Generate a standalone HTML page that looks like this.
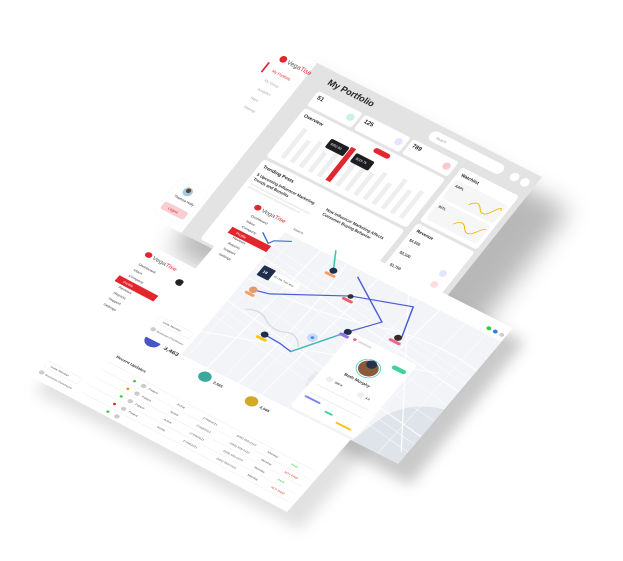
<!DOCTYPE html>
<html><head><meta charset="utf-8"><style>
html,body{margin:0;padding:0;background:#fff;width:623px;height:561px;overflow:hidden}
svg{display:block}
text{font-family:"Liberation Sans",sans-serif}
</style></head><body>
<svg width="623" height="561" viewBox="0 0 623 561" xmlns="http://www.w3.org/2000/svg">
<defs>
<filter id="blur" x="-30%" y="-30%" width="160%" height="160%"><feGaussianBlur stdDeviation="12"/></filter>
<filter id="blur2" x="-30%" y="-30%" width="160%" height="160%"><feGaussianBlur stdDeviation="7"/></filter>
</defs>

<polygon points="305,75 570,210 435,385 170,250" fill="#8a8a8a" opacity="0.6" filter="url(#blur)"/>
<polygon points="150,255 415,395 300,530 35,392" fill="#aaa" opacity="0.35" filter="url(#blur2)"/>
<polygon points="262,210 525,342 410,485 150,350" fill="#888" opacity="0.45" filter="url(#blur2)"/>

<!-- TOP PANEL -->
<g transform="matrix(0.26,0.132,-0.194,0.243,282,45)">
<rect width="1000" height="700" fill="#fff"/>
<rect x="135" width="865" height="700" fill="#e3e3e3"/>
<rect x="0" y="70" width="6" height="40" fill="#e3262e"/>
<circle cx="35" cy="40" r="12" fill="#e3262e"/>
<text x="52" y="48" font-size="22" fill="#555">Vega<tspan fill="#e3262e">Tise</tspan></text>
<rect x="18" y="72" width="105" height="34" rx="8" fill="#fff" stroke="#f0f0f0"/>
<text x="30" y="94" font-size="13" fill="#e3262e">My Portfolio</text>
<text x="30" y="132" font-size="12" fill="#aaa">My Group</text>
<text x="30" y="168" font-size="12" fill="#aaa">Analytics</text>
<text x="30" y="204" font-size="12" fill="#aaa">Rack</text>
<text x="30" y="240" font-size="12" fill="#aaa">Settings</text>
<rect x="12" y="540" width="110" height="140" rx="10" fill="#fff" stroke="#eee"/>
<circle cx="63" cy="570" r="16" fill="#9ccbe0"/><circle cx="63" cy="566" r="8" fill="#6b4020"/>
<text x="35" y="605" font-size="12" fill="#333">Theresa Holly</text>
<rect x="22" y="630" width="90" height="30" rx="8" fill="#f7cfd1"/>
<text x="45" y="650" font-size="12" fill="#e3262e">Logout</text>
<text x="208" y="48" font-size="30" font-weight="bold" fill="#222">My Portfolio</text>
<rect x="600" y="22" width="280" height="38" rx="19" fill="#fff"/>
<text x="625" y="46" font-size="12" fill="#999">Search</text>
<circle cx="925" cy="41" r="15" fill="#fff"/><circle cx="965" cy="41" r="15" fill="#fff"/>
<rect x="200" y="80" width="170" height="60" rx="8" fill="#fff"/>
<text x="212" y="106" font-size="20" font-weight="bold" fill="#222">51</text>
<circle cx="345" cy="110" r="13" fill="#c8f3e6"/>
<rect x="380" y="80" width="175" height="60" rx="8" fill="#fff"/>
<text x="392" y="106" font-size="20" font-weight="bold" fill="#222">125</text>
<circle cx="530" cy="110" r="13" fill="#e2e5fb"/>
<rect x="565" y="80" width="175" height="60" rx="8" fill="#fff"/>
<text x="577" y="106" font-size="20" font-weight="bold" fill="#222">789</text>
<circle cx="715" cy="110" r="13" fill="#f9c9cc"/>
<rect x="200" y="150" width="540" height="200" rx="10" fill="#fff"/>
<text x="215" y="178" font-size="16" font-weight="bold" fill="#222">Overview</text>
<rect x="480" y="160" width="60" height="18" rx="9" fill="#e3262e"/>
<g fill="#eeeeee">
<rect x="240" y="210" width="16" height="120"/><rect x="275" y="240" width="16" height="90"/><rect x="310" y="225" width="16" height="105"/><rect x="345" y="250" width="16" height="80"/><rect x="380" y="215" width="16" height="115"/><rect x="450" y="230" width="16" height="100"/><rect x="485" y="205" width="16" height="125"/><rect x="520" y="240" width="16" height="90"/><rect x="555" y="220" width="16" height="110"/><rect x="590" y="245" width="16" height="85"/><rect x="625" y="210" width="16" height="120"/><rect x="660" y="235" width="16" height="95"/><rect x="695" y="220" width="16" height="110"/>
</g>
<rect x="413" y="195" width="18" height="135" fill="#e3262e"/>
<rect x="340" y="200" width="70" height="36" rx="6" fill="#1e1e22"/>
<text x="350" y="220" font-size="11" fill="#fff">$352.90</text>
<rect x="440" y="205" width="70" height="36" rx="6" fill="#1e1e22"/>
<text x="450" y="225" font-size="11" fill="#fff">$215.75</text>
<rect x="200" y="360" width="540" height="330" rx="10" fill="#fff"/>
<text x="215" y="388" font-size="16" font-weight="bold" fill="#222">Trending Posts</text>
<text x="215" y="420" font-size="14" font-weight="bold" fill="#333">5 Upcoming Influencer Marketing</text>
<text x="215" y="438" font-size="14" font-weight="bold" fill="#333">Trends and Benefits</text>
<rect x="215" y="450" width="230" height="6" fill="#eee"/><rect x="215" y="462" width="200" height="6" fill="#eee"/>
<text x="480" y="420" font-size="14" font-weight="bold" fill="#333">How Influencer Marketing Affects</text>
<text x="480" y="438" font-size="14" font-weight="bold" fill="#333">Consumer Buying Behavior</text>
<rect x="760" y="90" width="220" height="220" rx="10" fill="#fff"/>
<text x="775" y="118" font-size="15" font-weight="bold" fill="#222">Watchlist</text>
<rect x="772" y="135" width="196" height="75" rx="8" fill="#f6f6f6"/>
<rect x="772" y="220" width="196" height="75" rx="8" fill="#f6f6f6"/>
<text x="782" y="158" font-size="12" font-weight="bold" fill="#333">AAPL</text>
<text x="782" y="243" font-size="12" font-weight="bold" fill="#333">INTL</text>
<path d="M860 190 q20 -30 40 -5 t40 -10 t20 -15" stroke="#f5b400" stroke-width="3" fill="none"/>
<path d="M860 270 q20 -30 40 -5 t40 -5 t20 -20" stroke="#f5b400" stroke-width="3" fill="none"/>
<rect x="760" y="320" width="220" height="250" rx="10" fill="#fff"/>
<text x="775" y="348" font-size="15" font-weight="bold" fill="#222">Revenue</text>
<text x="775" y="385" font-size="13" font-weight="bold" fill="#333">$4,500</text>
<text x="775" y="435" font-size="13" font-weight="bold" fill="#333">$2,100</text>
<text x="775" y="485" font-size="13" font-weight="bold" fill="#333">$1,750</text>
<circle cx="940" cy="430" r="12" fill="#e2e5fb"/><circle cx="940" cy="475" r="12" fill="#fbdde0"/><circle cx="940" cy="520" r="12" fill="#dce6fb"/>
</g>

<!-- TABLE PANEL -->
<g transform="matrix(0.259,0.137,-0.167,0.19,145,242)">
<rect width="1000" height="700" fill="#fff"/>
<circle cx="40" cy="40" r="12" fill="#e3262e"/>
<text x="57" y="48" font-size="22" fill="#555">Vega<tspan fill="#e3262e">Tise</tspan></text>
<g font-size="13" fill="#333">
<text x="35" y="95">Dashboard</text><text x="35" y="125">Inbox</text><text x="35" y="155">Company</text>
<text x="35" y="215">Reviews</text><text x="35" y="245">Reports</text><text x="35" y="275">Support</text><text x="35" y="305">Settings</text>
</g>
<rect x="10" y="168" width="150" height="30" fill="#e3262e"/>
<text x="35" y="188" font-size="13" fill="#fff">Profile</text>
<circle cx="185" cy="80" r="14" fill="#222"/>
<rect x="20" y="610" width="130" height="30" rx="6" fill="none" stroke="#ddd"/>
<text x="40" y="630" font-size="11" fill="#555">Invite Member</text>
<circle cx="30" cy="665" r="9" fill="#ccc"/>
<text x="45" y="669" font-size="10" fill="#555">Buchanan Chandreyee</text>
<circle cx="250" cy="340" r="28" fill="#4656c9"/>
<text x="295" y="350" font-size="22" font-weight="bold" fill="#333">3,463</text>
<circle cx="470" cy="370" r="22" fill="#3aa99c"/>
<text x="505" y="378" font-size="14" font-weight="bold" fill="#333">2,565</text>
<circle cx="650" cy="370" r="22" fill="#d4a82a"/>
<text x="685" y="378" font-size="14" font-weight="bold" fill="#333">2,565</text>
<text x="190" y="470" font-size="15" font-weight="bold" fill="#333">Recent Updates</text>
<g stroke="#eee" stroke-width="2">
<line x1="180" y1="500" x2="980" y2="500"/><line x1="180" y1="540" x2="980" y2="540"/><line x1="180" y1="580" x2="980" y2="580"/><line x1="180" y1="620" x2="980" y2="620"/><line x1="180" y1="660" x2="980" y2="660"/>
</g>
<g fill="#ccc"><circle cx="330" cy="520" r="9"/><circle cx="330" cy="560" r="9"/><circle cx="330" cy="600" r="9"/><circle cx="330" cy="640" r="9"/><circle cx="330" cy="680" r="9"/></g>
<circle cx="295" cy="520" r="5" fill="#2ecc40"/><circle cx="295" cy="560" r="5" fill="#f58a07"/><circle cx="295" cy="600" r="5" fill="#2ecc40"/><circle cx="295" cy="640" r="5" fill="#e3262e"/><circle cx="295" cy="680" r="5" fill="#2ecc40"/>
<g font-size="11" fill="#555">
<text x="350" y="524">Patient</text><text x="460" y="524">Active</text><text x="560" y="524">27/08/2021</text><text x="690" y="524">(555) 555-0110</text><text x="810" y="524">Monday</text><text x="900" y="524" fill="#2ecc40">PAID</text>
<text x="350" y="564">Patient</text><text x="460" y="564">Active</text><text x="560" y="564">27/08/2021</text><text x="690" y="564">(555) 555-0110</text><text x="810" y="564">Monday</text><text x="900" y="564" fill="#e3262e">NOT PAID</text>
<text x="350" y="604">Patient</text><text x="460" y="604">Active</text><text x="560" y="604">27/08/2021</text><text x="690" y="604">(555) 555-0110</text><text x="810" y="604">Monday</text><text x="900" y="604" fill="#2ecc40">PAID</text>
<text x="350" y="644">Patient</text><text x="460" y="644">Active</text><text x="560" y="644">27/08/2021</text><text x="690" y="644">(555) 555-0110</text><text x="810" y="644">Monday</text><text x="900" y="644" fill="#e3262e">NOT PAID</text>
</g>
</g>

<!-- MAP PANEL -->
<g transform="matrix(0.258,0.13,-0.164,0.194,255,198)">
<rect width="1000" height="700" fill="#fff"/>
<circle cx="30" cy="30" r="12" fill="#e3262e"/>
<text x="47" y="38" font-size="22" fill="#555">Vega<tspan fill="#e3262e">Tise</tspan></text>
<g font-size="13" fill="#333">
<text x="30" y="75">Dashboard</text><text x="30" y="103">Inbox</text><text x="30" y="131">Company</text>
<text x="30" y="187">Reviews</text><text x="30" y="215">Reports</text><text x="30" y="243">Support</text><text x="30" y="271">Settings</text>
</g>
<rect x="5" y="145" width="150" height="30" fill="#e3262e"/>
<text x="30" y="165" font-size="13" fill="#fff">Profile</text>
<rect x="15" y="600" width="130" height="30" rx="6" fill="none" stroke="#ddd"/>
<text x="35" y="620" font-size="11" fill="#555">Invite Member</text>
<circle cx="25" cy="660" r="9" fill="#ccc"/>
<text x="40" y="664" font-size="10" fill="#555">Buchanan Chandreyee</text>
<text x="175" y="45" font-size="12" fill="#555">Search</text>
<circle cx="935" cy="45" r="8" fill="#2ecc40"/><circle cx="960" cy="45" r="8" fill="#2d7ff9"/><circle cx="985" cy="45" r="8" fill="#ccc"/>
<rect x="160" y="70" width="840" height="630" fill="#f3f4f7"/>
<path d="M820 700 L850 560 Q890 450 1000 420 L1000 700 Z" fill="#dfe3ea"/>
<path d="M560 520 q40 -20 60 20 t-10 60 q-30 10 -50 -30 Z" fill="#e6e9ee"/>
<g stroke="#fff" stroke-width="4" fill="none">
<path d="M160 200 L1000 330"/><path d="M160 420 L1000 560"/><path d="M300 70 L260 700"/><path d="M520 70 L470 700"/><path d="M760 70 L700 700"/><path d="M160 300 Q400 320 600 250 T1000 220"/><path d="M400 70 Q420 300 380 700"/><path d="M160 580 L900 300"/><path d="M640 70 L980 650"/>
</g>
<g stroke="#fdfdfe" stroke-width="2" fill="none">
<path d="M200 70 L180 700"/><path d="M350 70 L330 700"/><path d="M600 70 L570 700"/><path d="M860 70 L820 700"/><path d="M160 140 L1000 260"/><path d="M160 500 L1000 640"/><path d="M160 360 L1000 480"/><path d="M940 70 L920 700"/><path d="M160 250 L1000 400"/><path d="M450 70 L420 700"/><path d="M680 70 L650 700"/><path d="M160 170 L1000 290"/><path d="M160 460 L1000 600"/>
</g>
<path d="M230 420 q40 -30 80 0 t80 10 t70 30" stroke="#d6dbe3" stroke-width="5" fill="none"/>
<polyline points="100,110 140,140 150,120 200,90" fill="none" stroke="#3f6fd8" stroke-width="5"/>
<polyline points="206,335 260,320 486,180 680,105 720,240" fill="none" stroke="#4a5fd4" stroke-width="5"/>
<polyline points="340,476 400,480 450,490 560,315 630,217 460,98" fill="none" stroke="#4a5fd4" stroke-width="5"/>
<polyline points="450,490 560,315" fill="none" stroke="#3fbfb0" stroke-width="5"/>
<polyline points="380,120 340,42" fill="none" stroke="#3fbfb0" stroke-width="5"/>
<rect x="180" y="225" width="45" height="50" rx="4" fill="#1f2d4e"/>
<text x="190" y="255" font-size="15" font-weight="bold" fill="#fff">18</text>
<rect x="225" y="230" width="100" height="40" fill="#fff"/>
<text x="232" y="252" font-size="10" fill="#333">52 Oak Tree way</text>
<circle cx="206" cy="335" r="14" fill="#e49a6a"/>
<rect x="188" y="350" width="36" height="12" rx="6" fill="#f5a06b"/>
<circle cx="380" cy="120" r="13" fill="#1f2d4e"/>
<rect x="360" y="134" width="40" height="12" rx="6" fill="#f5a06b"/>
<circle cx="486" cy="182" r="10" fill="#333"/>
<rect x="466" y="195" width="40" height="12" rx="6" fill="#f05d6e"/>
<circle cx="340" cy="476" r="13" fill="#1f2d4e"/>
<rect x="320" y="490" width="40" height="12" rx="6" fill="#f5c518"/>
<circle cx="477" cy="400" r="18" fill="#c9dbf5"/><circle cx="477" cy="400" r="6" fill="#4a8ce8"/>
<circle cx="560" cy="315" r="13" fill="#1f2d4e"/>
<rect x="540" y="329" width="40" height="12" rx="6" fill="#9b6ee8"/>
<circle cx="710" cy="245" r="13" fill="#3a2a22"/>
<rect x="688" y="259" width="44" height="12" rx="6" fill="#f06292"/>
<rect x="575" y="308" width="250" height="380" rx="12" fill="#fff"/>
<circle cx="597" cy="330" r="6" fill="#f06292"/>
<rect x="610" y="326" width="50" height="8" fill="#ddd"/>
<circle cx="700" cy="410" r="40" fill="#fff" stroke="#4fd1c5" stroke-width="3"/>
<circle cx="700" cy="410" r="34" fill="#8a5a3c"/>
<circle cx="700" cy="390" r="18" fill="#24324a"/>
<rect x="760" y="350" width="52" height="18" rx="9" fill="#3ed39b"/>
<text x="648" y="478" font-size="16" font-weight="bold" fill="#333">Beth Murphy</text>
<circle cx="620" cy="520" r="12" fill="#eee"/><circle cx="740" cy="520" r="12" fill="#eee"/>
<text x="640" y="524" font-size="11" font-weight="bold" fill="#333">349 K</text>
<text x="760" y="524" font-size="11" font-weight="bold" fill="#333">4.2</text>
<g fill="#ddd"><rect x="595" y="560" width="200" height="2"/><rect x="595" y="600" width="200" height="2"/></g>
<rect x="590" y="620" width="60" height="8" rx="4" fill="#7b7ff0"/>
<rect x="680" y="640" width="30" height="8" rx="4" fill="#3ed39b"/>
<rect x="735" y="660" width="60" height="8" rx="4" fill="#f5c518"/>
</g>
</svg>
</body></html>
